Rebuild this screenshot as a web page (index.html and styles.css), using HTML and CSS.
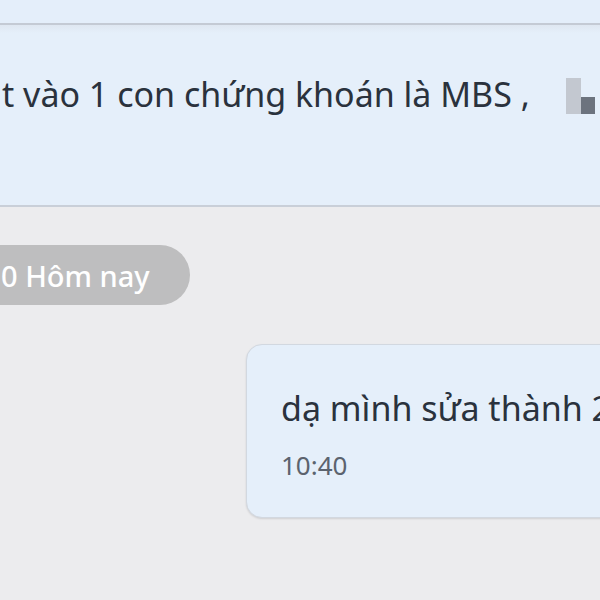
FILE: index.html
```html
<!DOCTYPE html>
<html lang="vi">
<head>
<meta charset="utf-8">
<link rel="stylesheet" href="styles.css">
</head>
<body>
<div class="chat">
  <div class="prev-bubble"></div>
  <div class="msg-in">
    <p class="msg-in-text">t vào 1 con chứng khoán là MBS ,</p>
    <div class="blurred-img"><span class="px px-a"></span><span class="px px-b"></span></div>
  </div>
  <div class="date-row"><span class="date-pill">0 Hôm nay</span></div>
  <div class="msg-out">
    <p class="msg-out-text">dạ mình sửa thành 2</p>
    <p class="msg-time">10:40</p>
  </div>
</div>
</body>
</html>
```
FILE: styles.css
```css
html, body {
  margin: 0;
  padding: 0;
}
body {
  width: 600px;
  height: 600px;
  overflow: hidden;
  background: #ececee;
  font-family: "Noto Sans", "Open Sans", sans-serif;
}
.chat {
  display: flex;
  flex-direction: column;
}
.prev-bubble {
  height: 23px;
  background: #e4eefa;
  border-bottom: 2px solid #c4cad4;
}
.msg-in {
  height: 180px;
  background: linear-gradient(#dfe7f1, #e5effa 8px);
  border-bottom: 2px solid #c9cfd8;
  display: flex;
  align-items: flex-start;
  gap: 36px;
  overflow: hidden;
}
.msg-in-text {
  margin: 0 0 0 2px;
  padding-top: 46px;
  font-size: 34px;
  line-height: 46px;
  color: #2a323d;
  white-space: nowrap;
}
.blurred-img {
  margin-top: 53px;
  display: flex;
  align-items: flex-end;
  height: 36px;
}
.px {
  display: block;
}
.px-a {
  width: 15px;
  height: 36px;
  background: #c3c8d0;
}
.px-b {
  width: 14px;
  height: 17px;
  background: #6c737e;
}
.date-row {
  margin-top: 38px;
  display: flex;
}
.date-pill {
  height: 60px;
  width: 220px;
  margin-left: -30px;
  padding: 3px 0 0 31px;
  box-sizing: border-box;
  border-radius: 30px;
  background: #bebebf;
  color: #ffffff;
  font-size: 29px;
  font-weight: 500;
  line-height: 56px;
  white-space: nowrap;
  overflow: hidden;
}
.msg-out {
  margin-top: 39px;
  margin-left: 246px;
  width: 400px;
  height: 174px;
  box-sizing: border-box;
  background: #e5effa;
  border: 1px solid #d2d8e0;
  border-radius: 16px;
  box-shadow: 0 1px 2px rgba(0, 0, 0, 0.12);
  padding: 40px 0 0 34px;
}
.msg-out-text {
  margin: 0;
  font-size: 34px;
  line-height: 46px;
  color: #2a323d;
  white-space: nowrap;
}
.msg-time {
  margin: 18px 0 0;
  font-size: 26px;
  line-height: 32px;
  color: #5b636e;
}
```
